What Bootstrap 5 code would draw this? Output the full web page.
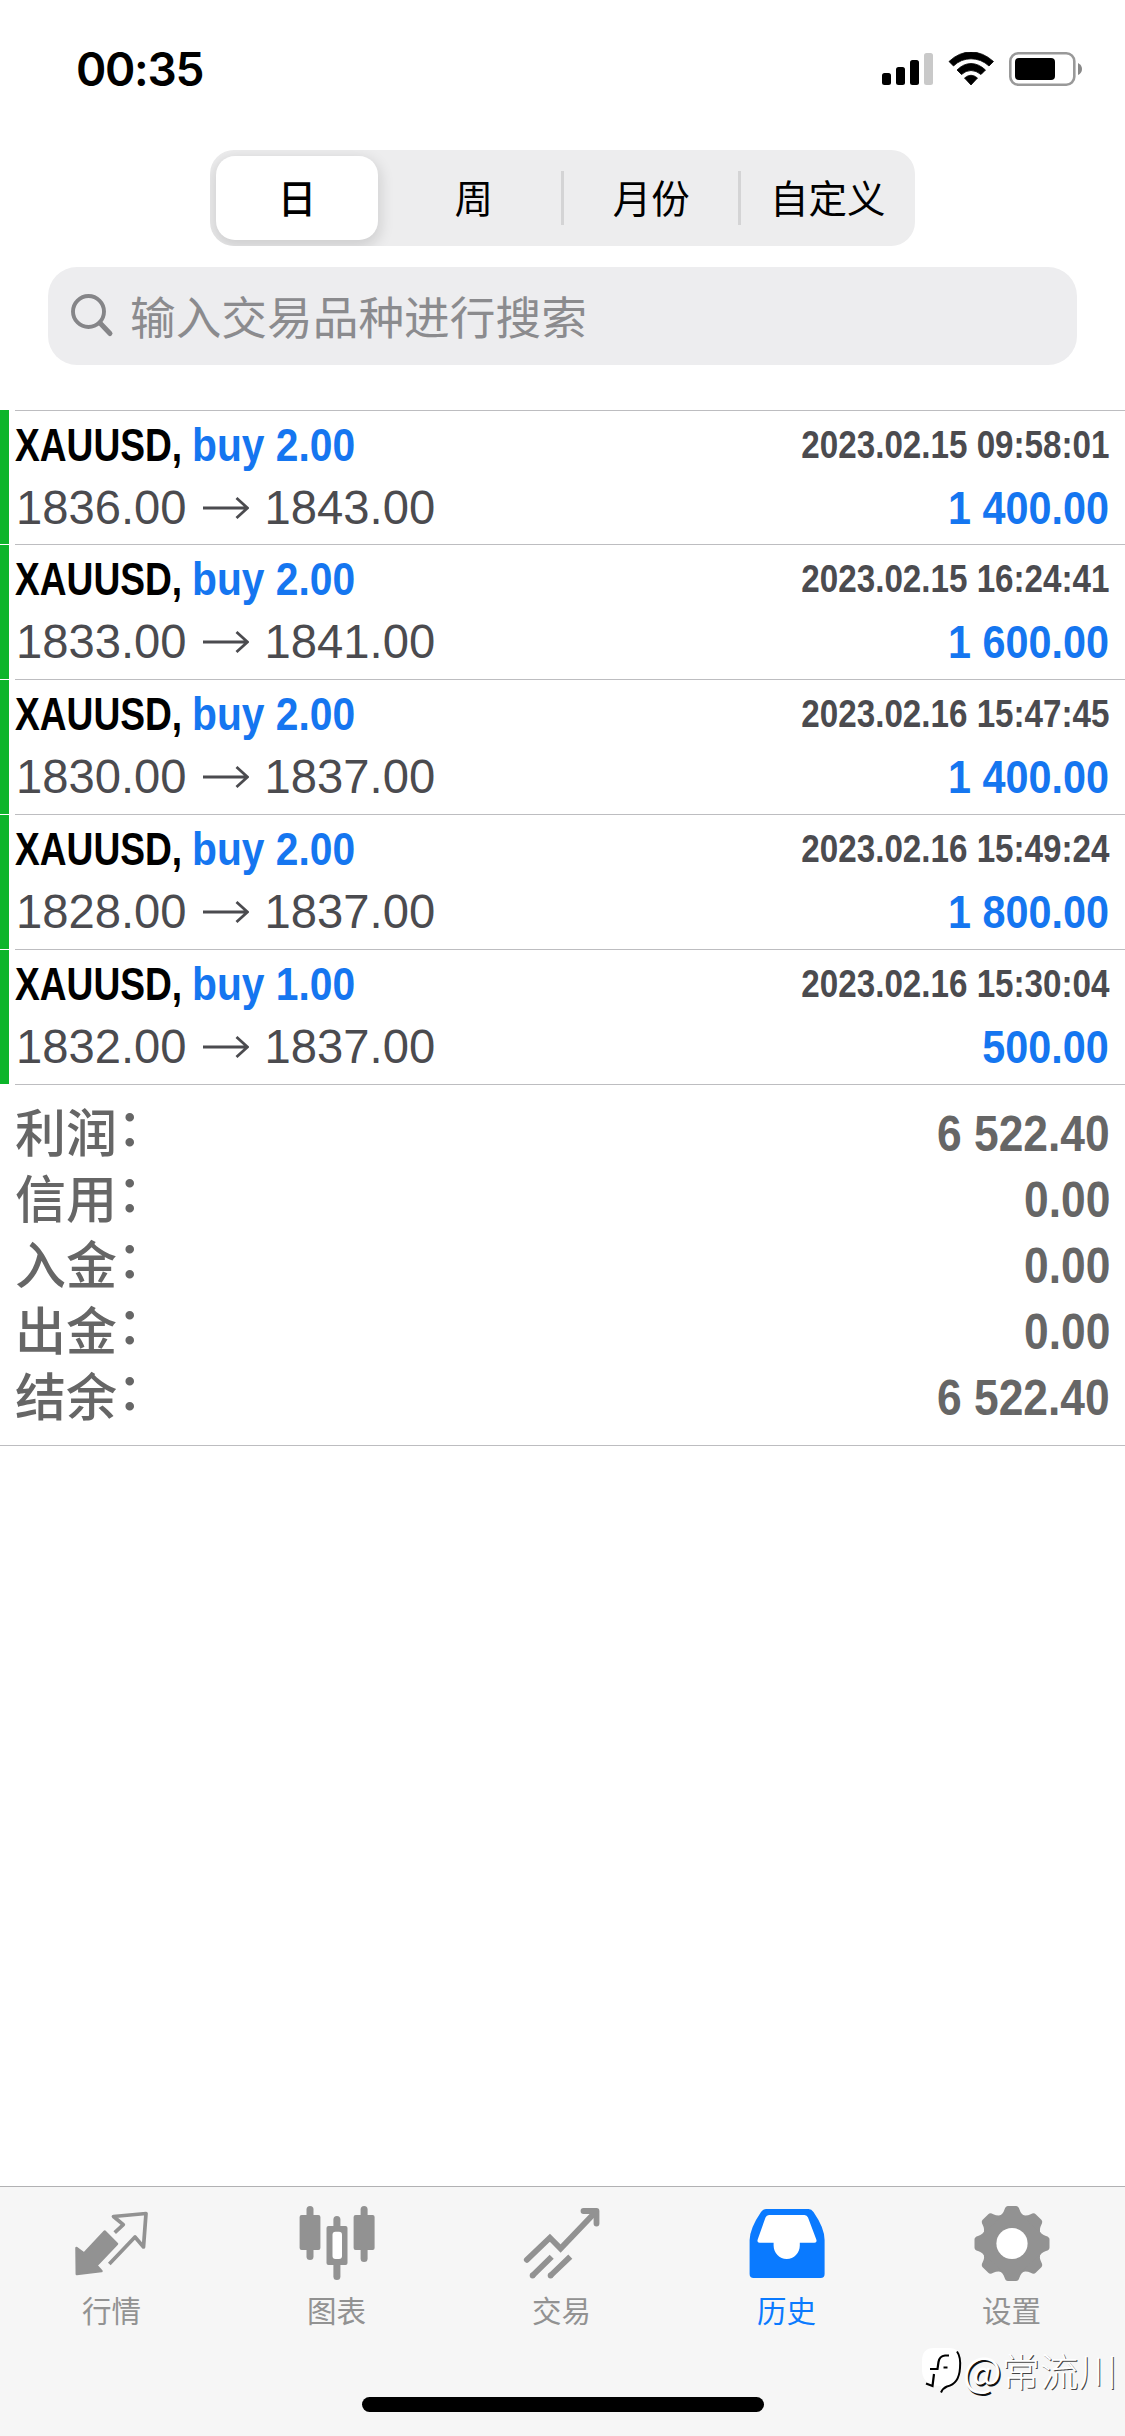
<!DOCTYPE html>
<html lang="zh-CN">
<head>
<meta charset="utf-8">
<meta name="viewport" content="width=device-width, initial-scale=1">
<title>历史</title>
<link href="https://cdn.jsdelivr.net/npm/bootstrap@5.3.0/dist/css/bootstrap.min.css" rel="stylesheet">
<style>
  body { width: 1125px; height: 2436px; overflow: hidden; background: #fff; color: #000; font-family: "Liberation Sans", "Noto Sans CJK SC", sans-serif; }
  .cjk { font-family: "Noto Sans CJK SC", sans-serif; }
  .status { height: 150px; padding: 44px 43px 0 76px; }
  .clock { font: 600 46px/50px Inter, sans-serif; letter-spacing: -1.3px; }
  .status svg { margin-top: 8px; }
  .seg { width: 705px; height: 96px; background: #ededee; border-radius: 24px; padding: 6px 0 6px 6px; overflow: hidden; }
  .seg .nav-link { height: 84px; padding: 0; border-radius: 19px; color: #000; font-size: 38.5px; line-height: 80px; text-align: center; width: 176.5px; }
  .seg .nav-link.active { width: 162px; margin-right: 7.5px; background: #fff; color: #000; font-weight: 500; box-shadow: 0 5px 14px 3px rgba(0,0,0,.12); }
  .seg .divided { position: relative; padding-left: 2px; }
  .seg .divided::before { content: ""; position: absolute; left: -1px; top: 15px; width: 3px; height: 54px; background: #d4d4d5; }
  .search { width: 1029px; height: 98px; margin: 21px 48px 45px; padding-left: 22px; border-radius: 29px; background: #ededef; color: #8b8b8e; }
  .search .hint { font-size: 45.7px; line-height: 60px; padding-bottom: 3px; }
  .deal { height: 135px; padding-left: 9px; background: linear-gradient(#0db52b, #0db52b) 0 1px / 9px 100% no-repeat; }
  .deal:first-child { height: 134px; background-position: 0 0; }
  .deal-body { margin-left: 6px; height: 100%; border-top: 1px solid #bdbdc0; padding-top: 8px; }
  .ln { height: 52px; line-height: 52px; font-size: 47px; white-space: nowrap; }
  .ln2 { height: 63px; line-height: 63px; padding-top: 5px; }
  .sym { width: 177px; }
  .sq { display: inline-block; transform-origin: 0 50%; }
  .sqr { display: inline-block; transform-origin: 100% 50%; }
  .s-sym { transform: scaleX(.79); }
  .s-buy { transform: scaleX(.867); }
  .s-date { transform: scaleX(.862); font-size: 38.5px; color: #4b4b4f; }
  .s-val { transform: scaleX(.88); }
  .blue { color: #1576f0; }
  .price { color: #4b4b4f; font-size: 47.2px; padding: 5px 0 0 1px; }
  .deal-right { padding-right: 16px; }
  .totals { border-top: 1px solid #bdbdc0; margin-left: 15px; }
  .totals-wrap { border-bottom: 1px solid #bdbdc0; height: 362px; color: #666; }
  .tot { height: 66px; line-height: 66px; padding-right: 15px; }
  .tot .lab { font-size: 51px; font-weight: 500; line-height: 60px; padding-top: 4px; }
  .colon { display: inline-block; transform: translateY(-6px); }
  .tot .val { font-size: 50px; font-weight: 700; transform: scaleX(.887); }
  .tabs { height: 250px; background: #f6f6f6; border-top: 1px solid #b1b1b3; }
  .tabs .nav-link { width: 225px; padding: 15px 0 0; color: #929292; }
  .tabs .nav-link.active { color: #0a7aff; }
  .tabs .cap { font-size: 29.5px; line-height: 40px; height: 40px; margin: 7px 2px 0 0; }
  .home { width: 402px; height: 15px; border-radius: 8px; background: #000; bottom: 24px; left: 362px; }
  .wm { right: 8px; bottom: 39px; height: 56px; color: #fff; font-size: 38.5px; font-weight: 300; line-height: 56px; }
  .wm .at { font-size: 41px; font-weight: 400; text-shadow: 1.5px 1.5px 0 #111; }
  .wm .who { text-shadow: 1px 1px 0 #444; }
</style>
<script src="https://cdn.jsdelivr.net/npm/bootstrap@5.3.0/dist/js/bootstrap.bundle.min.js"></script>
</head>
<body class="d-flex flex-column position-relative">

<header class="status d-flex justify-content-between align-items-start flex-shrink-0">
  <div class="clock">00:35</div>
  <svg width="200" height="34" viewBox="882 52 200 34">
    <rect x="882" y="73" width="9" height="12" rx="2.5"/><rect x="896" y="67" width="9" height="18" rx="2.5"/>
    <rect x="910" y="60" width="9" height="25" rx="2.5"/><rect x="924" y="53" width="9" height="32" rx="2.5" fill="#c9c9c9"/>
    <path d="M949 61.5Q959 52 971 52T993.5 61.500L989 66Q981 58.800 971 58.800T953.500 66ZM957 70Q963.500 63.500 971 63.500T985.500 70L981 74.500Q976 70.500 971 70.500T961.500 74.500ZM964.500 78Q971 72.500 977.500 78L971 85Z" stroke="#000" stroke-width=".8" stroke-linejoin="round"/>
    <rect x="1010.300" y="53.300" width="64" height="31.400" rx="8" fill="none" stroke="#999" stroke-width="2.600"/>
    <rect x="1015" y="58" width="40" height="22" rx="4"/><path d="M1078 63q4 2 4 6t-4 6z" fill="#888"/>
  </svg>
</header>

<nav class="seg nav flex-nowrap mx-auto cjk flex-shrink-0">
  <a class="nav-link active">日</a>
  <a class="nav-link">周</a>
  <a class="nav-link divided">月份</a>
  <a class="nav-link divided">自定义</a>
</nav>

<div class="search d-flex align-items-center flex-shrink-0">
  <svg width="44" height="44" viewBox="0 0 44 44" fill="none" stroke="#858588" stroke-linecap="round"><circle cx="18.500" cy="17.500" r="15.500" stroke-width="3.900"/><path d="M30 29L40 39.500" stroke-width="5"/></svg>
  <span class="hint cjk ms-3">输入交易品种进行搜索</span>
</div>

<main class="flex-grow-1">
  <div id="deals"></div>
  <div class="totals-wrap">
    <div class="totals pt-3">
      <div class="tot d-flex justify-content-between"><span class="lab">利润<span class="colon">：</span></span><span class="val sqr">6 522.40</span></div>
      <div class="tot d-flex justify-content-between"><span class="lab">信用<span class="colon">：</span></span><span class="val sqr">0.00</span></div>
      <div class="tot d-flex justify-content-between"><span class="lab">入金<span class="colon">：</span></span><span class="val sqr">0.00</span></div>
      <div class="tot d-flex justify-content-between"><span class="lab">出金<span class="colon">：</span></span><span class="val sqr">0.00</span></div>
      <div class="tot d-flex justify-content-between"><span class="lab">结余<span class="colon">：</span></span><span class="val sqr">6 522.40</span></div>
    </div>
  </div>
</main>

<footer class="tabs flex-shrink-0 position-relative">
  <nav class="nav flex-nowrap text-center cjk">
    <a class="nav-link d-flex flex-column align-items-center">
      <svg width="80" height="80" viewBox="0 0 80 80"><path d="M3.800 72L3.500 46L11 51.500L31.600 29.500L44 42L23.500 63.500L28.500 69Z" fill="currentColor" stroke="currentColor" stroke-width="2.500" stroke-linejoin="round"/><path d="M41.700 30.700L50.300 22.700L40.500 14.500L73 11.500L70.500 45L62 35L36.300 62" fill="none" stroke="currentColor" stroke-width="3.700" stroke-linejoin="round"/></svg>
      <span class="cap">行情</span></a>
    <a class="nav-link d-flex flex-column align-items-center">
      <svg width="80" height="80" viewBox="0 0 80 80" fill="currentColor"><rect x="1.600" y="13" width="20.800" height="35" rx="2"/><rect x="8.500" y="4" width="7" height="54" rx="3.500"/><rect x="55.600" y="13" width="21" height="35" rx="2"/><rect x="62.600" y="4" width="7" height="56" rx="3.500"/><rect x="35.400" y="14" width="7" height="20" rx="3.500"/><rect x="35.400" y="58" width="7" height="20" rx="3.500"/><path d="M30.500 24h17a2 2 0 0 1 2 2v35a2 2 0 0 1-2 2h-17a2 2 0 0 1-2-2v-35a2 2 0 0 1 2-2z"/><rect x="34.500" y="29.700" width="9.500" height="27.300" rx="3" fill="#fff"/></svg>
      <span class="cap">图表</span></a>
    <a class="nav-link d-flex flex-column align-items-center">
      <svg width="80" height="80" viewBox="0 0 80 80" fill="none" stroke="currentColor" stroke-width="5.800"><path d="M3.800 57.800L26.900 35.700L37.600 46.500L73 9.500" stroke-linecap="round"/><path d="M60.500 9H73.500V21.500" stroke-linecap="round" stroke-linejoin="round"/><path d="M28.700 54.700L9.600 73.500M47.300 54.700L27.600 73.500"/><g fill="currentColor" stroke="none"><circle cx="9.600" cy="73.500" r="2.900"/><circle cx="27.600" cy="73.500" r="2.900"/></g></svg>
      <span class="cap">交易</span></a>
    <a class="nav-link active d-flex flex-column align-items-center">
      <svg width="80" height="80" viewBox="0 0 80 80"><path fill="currentColor" d="M18 7H60.500Q63.500 7 65.500 10Q76.600 26 76.600 38V72Q76.600 76 72.600 76H5.600Q1.600 76 1.600 72V38Q2 26 13 10Q15 7 18 7Z"/><path fill="#fff" d="M21 13H56.500Q59 13 60 15.500L68.300 37.500Q69.300 40.700 66.500 40.700H51.800V43.500C51.800 51 46 57 38.700 57C31.500 57 25.600 51 25.600 43.500V40.700H11.500Q8.700 40.700 9.700 37.500L17.500 15.500Q18.500 13 21 13Z"/></svg>
      <span class="cap">历史</span></a>
    <a class="nav-link d-flex flex-column align-items-center">
      <svg width="80" height="80" viewBox="0 0 80 80"><g transform="translate(39 41.500)" fill="currentColor"><circle r="30"/><path id="tooth" d="M-13.500 -27Q-9 -29 -7.500 -34Q-6.500 -37.500 -4 -37.500H4Q6.500 -37.500 7.500 -34Q9 -29 13.500 -27Z"/><use href="#tooth" transform="rotate(45)"/><use href="#tooth" transform="rotate(90)"/><use href="#tooth" transform="rotate(135)"/><use href="#tooth" transform="rotate(180)"/><use href="#tooth" transform="rotate(225)"/><use href="#tooth" transform="rotate(270)"/><use href="#tooth" transform="rotate(315)"/><circle r="15.600" fill="#fff"/></g></svg>
      <span class="cap">设置</span></a>
  </nav>
  <div class="home position-absolute"></div>
  <div class="wm cjk position-absolute d-flex align-items-center">
    <svg width="42" height="50" viewBox="0 0 42 50"><path d="M13 4H28Q39 4 39 17V27Q38 41 26 42Q22 43 20 48V42Q2 42 1 27V17Q1 4 13 4Z" fill="#fff"/><path d="M36 7.500Q40 13 39 24Q38 40 26 42.500Q22 44 20 48.500" fill="none" stroke="#000" stroke-width="2"/><path d="M28 11.500H24Q18.500 12 17.500 18L16.500 25H9M13 30L11.500 42L5 39.500" fill="none" stroke="#000" stroke-width="2.200"/><path d="M22.500 23.500h4" stroke="#000" stroke-width="2"/></svg>
    <span class="at">@</span><span class="who">常流川</span>
  </div>
</footer>

<script>
  const deals = [
    ["2.00", "1836.00", "1843.00", "2023.02.15 09:58:01", "1 400.00"],
    ["2.00", "1833.00", "1841.00", "2023.02.15 16:24:41", "1 600.00"],
    ["2.00", "1830.00", "1837.00", "2023.02.16 15:47:45", "1 400.00"],
    ["2.00", "1828.00", "1837.00", "2023.02.16 15:49:24", "1 800.00"],
    ["1.00", "1832.00", "1837.00", "2023.02.16 15:30:04", "500.00"]
  ];
  document.getElementById("deals").innerHTML = deals.map(([lot, from, to, time, profit]) => `
    <div class="deal"><div class="deal-body">
      <div class="ln d-flex justify-content-between deal-right fw-bold">
        <span class="d-flex"><span class="sym"><span class="sq s-sym">XAUUSD,</span></span><span class="sq s-buy blue">buy ${lot}</span></span>
        <span class="sqr s-date">${time}</span>
      </div>
      <div class="ln ln2 d-flex justify-content-between deal-right">
        <span class="price d-flex align-items-center">${from}<svg class="ms-3 me-3" width="46" height="24" viewBox="0 0 46 24" fill="none" stroke="currentColor" stroke-width="2.800"><path d="M0 12H44M33.500 2L44.500 12L33.500 22"/></svg>${to}</span>
        <span class="sqr s-val blue fw-bold">${profit}</span>
      </div>
    </div></div>`).join("");
</script>
</body>
</html>
